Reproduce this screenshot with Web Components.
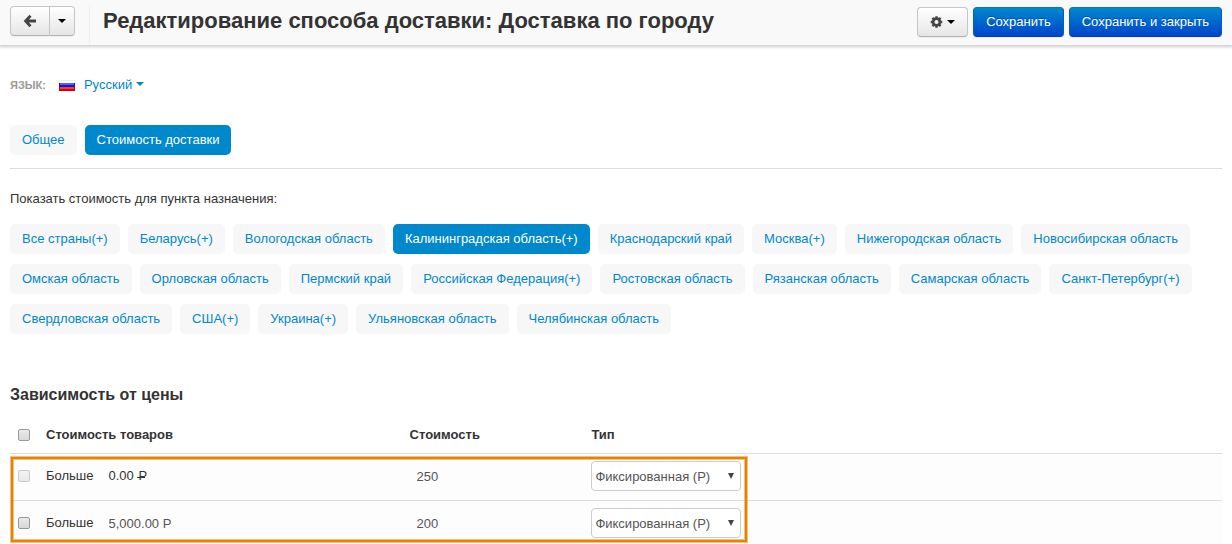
<!DOCTYPE html>
<html lang="ru">
<head>
<meta charset="utf-8">
<title>Редактирование способа доставки: Доставка по городу</title>
<style>
  body { margin: 0; background: #fff; color: #333; font: 13px/20px "Liberation Sans", Arial, sans-serif; }
</style>
</head>
<body>
<shipping-page></shipping-page>

<template id="t-button">
  <style>
    :host { display: block; }
    button { display: flex; align-items: center; justify-content: center; gap: 4px; box-sizing: border-box; width: 100%; height: 30px; margin: 0; padding: 0 12px; border: 1px solid #c5c5c5; border-bottom-color: #b3b3b3; border-radius: 4px; background: linear-gradient(#fff, #e6e6e6); color: #333; font: inherit; box-shadow: 0 1px 1px rgba(0,0,0,.05); white-space: nowrap; }
    :host([primary]) button { border-color: #0077c7 #0060c0 #003fb5; background: linear-gradient(#08c, #04c); color: #fff; text-shadow: 0 -1px 0 rgba(0,0,0,.25); }
    :host([first]) button { padding: 0; border-radius: 4px 0 0 4px; }
    :host([last]) button { padding: 0; border-radius: 0 4px 4px 0; border-left: 0; }
  </style>
  <button type="button"><slot></slot></button>
</template>

<template id="t-caret">
  <style>
    :host { display: block; border: 4px solid transparent; border-top-color: currentColor; border-bottom: 0; }
  </style>
</template>

<template id="t-header">
  <style>
    :host { display: flex; align-items: flex-start; gap: 5px; box-sizing: border-box; height: 45px; padding: 7px 10px 0; background: #f9f9f9; box-shadow: 0 1px 3px 1px rgba(0,0,0,.2); }
    .nav { display: flex; align-self: stretch; align-items: flex-start; margin-top: -1px; padding-right: 14px; border-right: 1px solid #f0f0f0; }
    .back { width: 40px; }
    .more { width: 25px; }
    h1 { flex: 1; margin: 0 0 0 8px; font-size: 22px; line-height: 28px; }
    svg { display: block; }
    ui-caret { color: #000; }
  </style>
  <div class="nav">
    <ui-button class="back" first><svg width="14" height="14" viewBox="0 0 14 14" role="img" aria-label="Назад"><path d="M7.500 1.800 2.600 7l4.900 5.200M3 7h10" fill="none" stroke="#444" stroke-width="2.800"/></svg></ui-button>
    <ui-button class="more" last><ui-caret></ui-caret></ui-button>
  </div>
  <h1><slot></slot></h1>
  <ui-button><svg width="13" height="14" viewBox="0 0 14 14" role="img" aria-label="Настройки"><g fill="none" stroke="#444"><circle cx="7" cy="7" r="3.600" stroke-width="2.800"/><path d="M7 .8v2.400M7 10.800v2.400M.8 7h2.400M10.800 7h2.400M2.600 2.600l1.600 1.600M9.800 9.800l1.600 1.600M11.400 2.600 9.800 4.200M4.200 9.800l-1.600 1.600" stroke-width="2.600"/></g></svg><ui-caret></ui-caret></ui-button>
  <ui-button primary>Сохранить</ui-button>
  <ui-button primary>Сохранить и закрыть</ui-button>
</template>

<template id="t-language">
  <style>
    :host { display: flex; align-items: center; }
    .label { color: #999; font-size: 11px; font-weight: bold; text-transform: uppercase; }
    a { display: flex; align-items: center; margin-left: 13px; color: #08c; text-decoration: none; }
    svg { display: block; margin-right: 9px; }
    ui-caret { margin: 0 0 2px 4px; }
  </style>
  <span class="label">Язык:</span>
  <a href="#"><svg width="16" height="11" viewBox="0 0 16 11" aria-hidden="true"><path fill="#ececec" d="M0 0h16v4H0z"/><path fill="#fff" d="M1 1h14v3H1z"/><path fill="#1111e8" d="M0 3h16v4H0z"/><path fill="#5c5cf5" d="M1 3h14v2H1z"/><path fill="#d40000" d="M0 7h16v4H0z"/><path fill="#ff3838" d="M1 7h14v2H1z"/></svg>Русский<ui-caret></ui-caret></a>
</template>

<template id="t-pill">
  <style>
    :host { display: block; }
    a { display: block; padding: 5px 12px; border-radius: 5px; background: #f7f7f7; color: #08c; text-decoration: none; white-space: nowrap; }
    :host([active]) a { background: #08c; color: #fff; }
  </style>
  <a href="#"><slot></slot></a>
</template>

<template id="t-pills">
  <style>:host { display: flex; flex-wrap: wrap; gap: 10px 8px; }</style>
  <slot></slot>
</template>

<template id="t-rates">
  <style>
    :host { display: block; position: relative; }
    table { width: 100%; table-layout: fixed; border-collapse: separate; border-spacing: 0; }
    .check { width: 28px; }
    .range { width: 30%; }
    .cost { width: 15%; }
    th, td { box-sizing: border-box; padding: 0 8px; border-bottom: 1px solid #ddd; text-align: left; vertical-align: middle; }
    th { height: 38px; }
    td { height: 47px; padding-bottom: 2px; }
    tbody tr { background: #fdfdfd; }
    tbody tr:last-child td { border-bottom-color: transparent; }
    th:first-child, td:first-child { padding-right: 0; }
    input, select { box-sizing: border-box; margin: 0; font: inherit; color: #555; }
    input[type=checkbox] { appearance: none; display: block; width: 12px; height: 12px; border: 1px solid #999; border-radius: 2px; background: linear-gradient(#eaeaea, #d8d8d8); }
    input[type=checkbox]:disabled { opacity: .5; }
    input[type=text] { width: 90px; height: 30px; padding: 0 6px; border: 1px solid transparent; border-radius: 4px; background: transparent; }
    .line { display: flex; align-items: center; gap: 8px; }
    .fixed { padding-left: 7px; }
    .rub { padding-left: 1px; background: linear-gradient(currentColor, currentColor) 0 9px / 8px 1px no-repeat; }
    .pick { display: block; position: relative; width: 150px; }
    select { appearance: none; display: block; width: 100%; height: 30px; padding: 1px 3px 0; border: 1px solid #ccc; border-radius: 4px; background: #fff; }
    .pick svg { position: absolute; right: 7px; top: 12px; pointer-events: none; }
    .frame { position: absolute; inset: 41px auto 0 1px; width: 736px; height: 85px; box-sizing: border-box; border: 2px solid #e88300; box-shadow: 0 0 0 1px rgba(232,131,0,.5), inset 0 0 0 1px rgba(232,131,0,.5); pointer-events: none; }
  </style>
  <table>
    <colgroup><col class="check"><col class="range"><col class="cost"><col></colgroup>
    <thead><tr><th><input type="checkbox" aria-label="Выбрать все"></th><th>Стоимость товаров</th><th>Стоимость</th><th>Тип</th></tr></thead>
    <tbody></tbody>
  </table>
  <div class="frame"></div>
</template>

<template id="t-page">
  <style>
    :host { display: block; }
    main { padding: 30px 10px 0; }
    .tabs { margin-top: 30px; padding-bottom: 13px; border-bottom: 1px solid #ddd; }
    p { margin: 20px 0 15px; }
    h2 { margin: 51px 0 11px; font-size: 16px; line-height: 20px; }
  </style>
  <page-header>Редактирование способа доставки: Доставка по городу</page-header>
  <main>
    <language-picker></language-picker>
    <nav-pills class="tabs"><nav-pill>Общее</nav-pill><nav-pill active>Стоимость доставки</nav-pill></nav-pills>
    <p>Показать стоимость для пункта назначения:</p>
    <nav-pills>
      <nav-pill>Все страны(+)</nav-pill>
      <nav-pill>Беларусь(+)</nav-pill>
      <nav-pill>Вологодская область</nav-pill>
      <nav-pill active>Калининградская область(+)</nav-pill>
      <nav-pill>Краснодарский край</nav-pill>
      <nav-pill>Москва(+)</nav-pill>
      <nav-pill>Нижегородская область</nav-pill>
      <nav-pill>Новосибирская область</nav-pill>
      <nav-pill>Омская область</nav-pill>
      <nav-pill>Орловская область</nav-pill>
      <nav-pill>Пермский край</nav-pill>
      <nav-pill>Российская Федерация(+)</nav-pill>
      <nav-pill>Ростовская область</nav-pill>
      <nav-pill>Рязанская область</nav-pill>
      <nav-pill>Самарская область</nav-pill>
      <nav-pill>Санкт-Петербург(+)</nav-pill>
      <nav-pill>Свердловская область</nav-pill>
      <nav-pill>США(+)</nav-pill>
      <nav-pill>Украина(+)</nav-pill>
      <nav-pill>Ульяновская область</nav-pill>
      <nav-pill>Челябинская область</nav-pill>
    </nav-pills>
    <h2>Зависимость от цены</h2>
    <rate-table></rate-table>
  </main>
</template>

<script>
  const define = (name, templateId, setup) => customElements.define(name, class extends HTMLElement {
    constructor() {
      super();
      const root = this.attachShadow({ mode: "open" });
      root.append(document.getElementById(templateId).content.cloneNode(true));
      if (setup) setup(root);
    }
  });

  const rates = [
    { base: true, cost: "250" },
    { amount: "5,000.00 Р", cost: "200" }
  ];

  const rateRow = r => `<tr>
    <td><input type="checkbox" aria-label="Выбрать" ${r.base ? "disabled" : ""}></td>
    <td><div class="line">Больше ${r.base
      ? '<span class="fixed">0.00 <span class="rub">Р</span></span>'
      : `<input type="text" aria-label="Стоимость товаров" value="${r.amount}">`}</div></td>
    <td><input type="text" aria-label="Стоимость" value="${r.cost}"></td>
    <td><label class="pick"><select aria-label="Тип"><option>Фиксированная (Р)</option></select><svg width="6" height="6" viewBox="0 0 6 6" aria-hidden="true"><path d="M0 0h6L3 6z" fill="#444"/></svg></label></td>
  </tr>`;

  define("ui-caret", "t-caret");
  define("ui-button", "t-button");
  define("page-header", "t-header");
  define("language-picker", "t-language");
  define("nav-pill", "t-pill");
  define("nav-pills", "t-pills");
  define("rate-table", "t-rates", root => {
    root.querySelector("tbody").innerHTML = rates.map(rateRow).join("");
  });
  define("shipping-page", "t-page");
</script>
</body>
</html>
